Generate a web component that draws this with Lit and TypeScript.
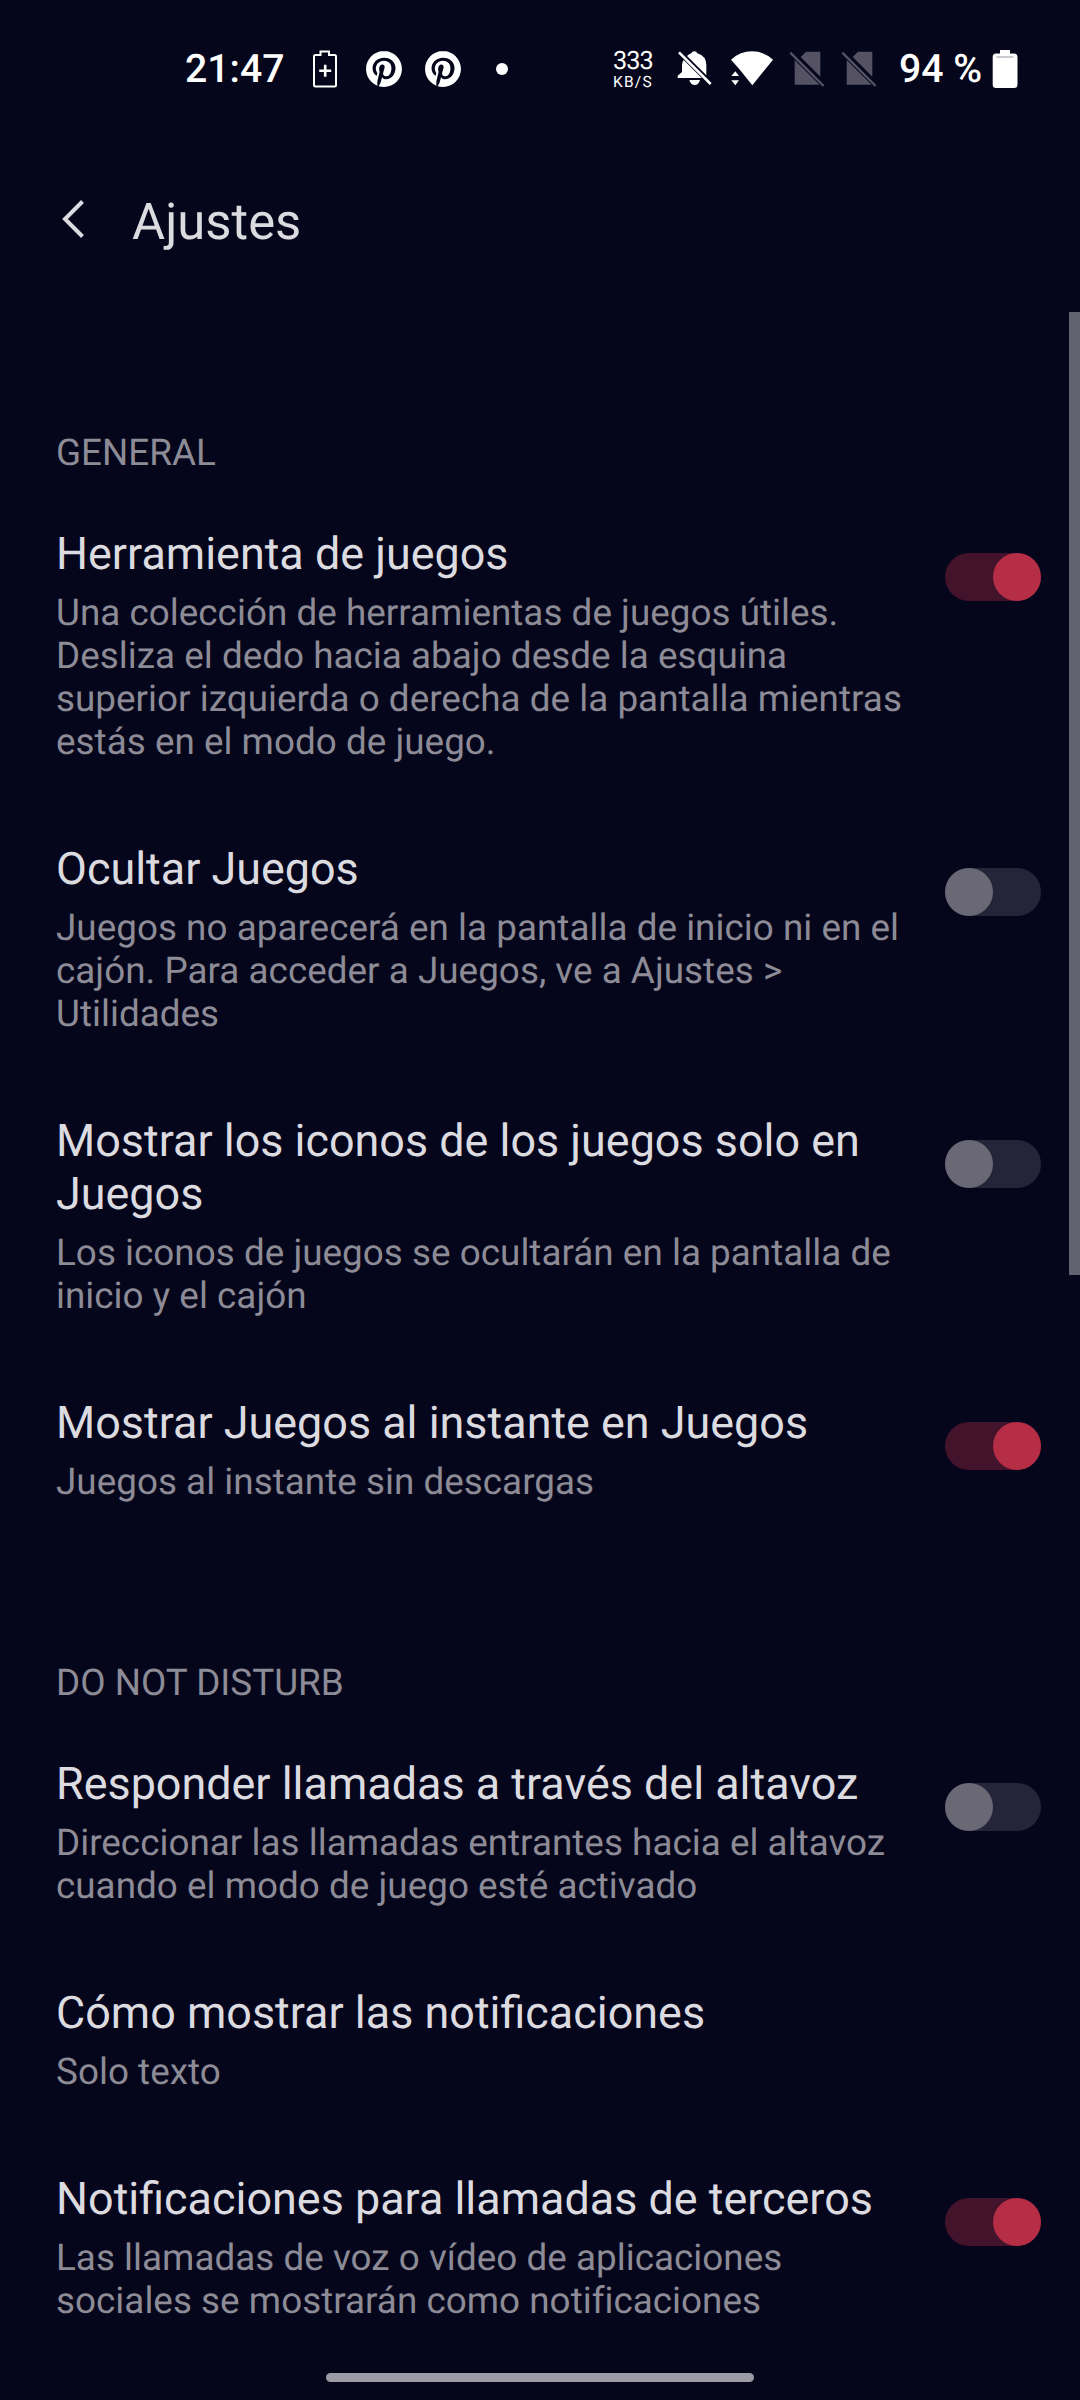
import { LitElement, html, css, nothing } from "lit";
import { customElement, property } from "lit/decorators.js";

interface Setting {
  title: string;
  detail: string;
  on?: boolean;
}

const SECTIONS: { label: string; items: Setting[] }[] = [
  {
    label: "GENERAL",
    items: [
      {
        title: "Herramienta de juegos",
        detail:
          "Una colección de herramientas de juegos útiles.\nDesliza el dedo hacia abajo desde la esquina\nsuperior izquierda o derecha de la pantalla mientras\nestás en el modo de juego.",
        on: true,
      },
      {
        title: "Ocultar Juegos",
        detail:
          "Juegos no aparecerá en la pantalla de inicio ni en el\ncajón. Para acceder a Juegos, ve a Ajustes >\nUtilidades",
        on: false,
      },
      {
        title: "Mostrar los iconos de los juegos solo en\nJuegos",
        detail: "Los iconos de juegos se ocultarán en la pantalla de\ninicio y el cajón",
        on: false,
      },
      {
        title: "Mostrar Juegos al instante en Juegos",
        detail: "Juegos al instante sin descargas",
        on: true,
      },
    ],
  },
  {
    label: "DO NOT DISTURB",
    items: [
      {
        title: "Responder llamadas a través del altavoz",
        detail: "Direccionar las llamadas entrantes hacia el altavoz\ncuando el modo de juego esté activado",
        on: false,
      },
      { title: "Cómo mostrar las notificaciones", detail: "Solo texto" },
      {
        title: "Notificaciones para llamadas de terceros",
        detail: "Las llamadas de voz o vídeo de aplicaciones\nsociales se mostrarán como notificaciones",
        on: true,
      },
    ],
  },
];

@customElement("toggle-switch")
class ToggleSwitch extends LitElement {
  @property({ type: Boolean, reflect: true }) on = false;

  static styles = css`
    :host {
      display: flex;
      box-sizing: border-box;
      width: 96px;
      height: 48px;
      border-radius: 24px;
      background: #25253a;
    }
    :host([on]) {
      background: #43132b;
      justify-content: flex-end;
    }
    .thumb {
      width: 48px;
      height: 48px;
      border-radius: 50%;
      background: #696874;
    }
    :host([on]) .thumb {
      background: #b52e46;
    }
  `;

  render() {
    return html`<div class="thumb"></div>`;
  }
}

@customElement("status-bar")
class StatusBar extends LitElement {
  static styles = css`
    :host {
      display: flex;
      align-items: center;
      box-sizing: border-box;
      height: 138px;
      padding: 0 62px 0 185px;
      color: #fff;
    }
    svg {
      display: block;
      flex: none;
    }
    .clock,
    .level {
      font-size: 39.2px;
      font-weight: 500;
      line-height: 46px;
      white-space: pre;
      flex: none;
    }
    .clock {
      width: 100px;
      margin-right: 27px;
    }
    .saver {
      margin-right: 28px;
    }
    .pin {
      margin-right: 23px;
    }
    .dot {
      width: 12px;
      height: 12px;
      border-radius: 50%;
      background: #fff;
      margin-left: 12px;
    }
    .right {
      display: flex;
      align-items: center;
      margin-left: auto;
    }
    .speed {
      display: flex;
      flex-direction: column;
      width: 42px;
      margin-right: 22px;
      padding-top: 1px;
    }
    .rate {
      font-size: 25.3px;
      line-height: 24px;
      letter-spacing: -1px;
    }
    .unit {
      font-size: 15.5px;
      line-height: 16px;
      letter-spacing: 1.2px;
    }
    .wifi {
      margin-left: 18px;
    }
    .sim {
      margin-left: 16px;
    }
    .level {
      width: 83px;
      margin-left: 22px;
    }
    .battery {
      margin-left: 10px;
    }
  `;

  private pin() {
    return html`<svg class="pin" width="36" height="36" viewBox="0 0 24 24" fill="#fff">
      <path
        d="M12.017 0C5.396 0 .029 5.367.029 11.987c0 5.079 3.158 9.417 7.618 11.162-.105-.949-.199-2.403.041-3.439.219-.937 1.406-5.957 1.406-5.957s-.359-.72-.359-1.781c0-1.663.967-2.911 2.168-2.911 1.024 0 1.518.769 1.518 1.688 0 1.029-.653 2.567-.992 3.992-.285 1.193.6 2.165 1.775 2.165 2.128 0 3.768-2.245 3.768-5.487 0-2.861-2.063-4.869-5.008-4.869-3.41 0-5.409 2.562-5.409 5.199 0 1.033.394 2.143.889 2.741.099.12.112.225.085.345-.09.375-.293 1.199-.334 1.363-.053.225-.172.271-.401.165-1.495-.69-2.433-2.878-2.433-4.646 0-3.776 2.748-7.252 7.92-7.252 4.158 0 7.392 2.967 7.392 6.923 0 4.135-2.607 7.462-6.233 7.462-1.214 0-2.354-.629-2.758-1.379l-.749 2.848c-.269 1.045-1.004 2.352-1.498 3.146 1.123.345 2.306.535 3.55.535 6.607 0 11.985-5.365 11.985-11.987C23.97 5.39 18.592.026 11.985.026z"
      />
    </svg>`;
  }

  private sim() {
    return html`<svg class="sim" width="36" height="36" viewBox="0 0 108 108" fill="#555363">
      <path d="M51 2H94V77L35 18z" />
      <path d="M17 27L92 101H17z" />
      <path d="M4 5L104 105" stroke="#555363" stroke-width="7" />
    </svg>`;
  }

  render() {
    return html`
      <span class="clock">21:47</span>
      <svg class="saver" width="26" height="38" viewBox="0 0 26 38" fill="none" stroke="#fff">
        <path d="M8.500 5V1.500H17V5H22.500Q24 5 24 6.500V35Q24 36.500 22.500 36.500H3.500Q2 36.500 2 35V6.500Q2 5 3.500 5z" stroke-width="2" />
        <path d="M7.200 20.700H19.200M13.200 14.700V26.700" stroke-width="2.600" />
      </svg>
      ${this.pin()}${this.pin()}
      <div class="dot"></div>
      <div class="right">
        <div class="speed">
          <span class="rate">333</span>
          <span class="unit">KB/S</span>
        </div>
        <svg width="36" height="36" viewBox="0 0 108 108" fill="#fff">
          <path d="M30 15Q36 9 43 7Q45 1 52 1Q59 1 61 7Q88 15 88 43V73z" />
          <path d="M20 27L74 81H2V74L15 63V42Q15 33 20 27z" />
          <path d="M37 87H69Q65 102 53 102Q41 102 37 87z" />
          <path d="M6 4L101 99" stroke="#fff" stroke-width="8" />
        </svg>
        <svg class="wifi" width="42" height="36" viewBox="0 0 126 108" fill="#fff">
          <path d="M0 26Q28 1 63 1T126 26L64 103L30 61L24 53z" />
          <path d="M1 75L13 61L24 75zM1 88H24L13 103z" />
        </svg>
        ${this.sim()}${this.sim()}
        <span class="level">94 %</span>
        <svg class="battery" width="26" height="38" viewBox="0 0 26 38">
          <path d="M8 0H18V3.500H22Q25.500 3.500 25.500 7V34.500Q25.500 38 22 38H4Q.7 38 .7 34.500V7Q.7 3.500 4 3.500H8z" fill="#fff" />
          <path d="M4.500 7H21.500" stroke="#c9c9cf" stroke-width="2" />
        </svg>
      </div>
    `;
  }
}

@customElement("setting-row")
class SettingRow extends LitElement {
  @property({ attribute: false }) item!: Setting;

  static styles = css`
    :host {
      display: flex;
      justify-content: space-between;
      align-items: flex-start;
    }
    .copy {
      display: flex;
      flex-direction: column;
      gap: 11px;
      white-space: pre;
    }
    .title {
      font-size: 44.9px;
      line-height: 53px;
      color: #dcdbe0;
    }
    .detail {
      font-size: 36.85px;
      line-height: 43px;
      letter-spacing: 0.02px;
      color: #8c8b96;
      font-variant-ligatures: common-ligatures;
    }
    .switch {
      margin-top: 26px;
      flex: none;
    }
  `;

  render() {
    const { title, detail, on } = this.item;
    return html`
      <div class="copy">
        <div class="title">${title}</div>
        <div class="detail">${detail}</div>
      </div>
      ${on === undefined ? nothing : html`<toggle-switch class="switch" ?on=${on}></toggle-switch>`}
    `;
  }
}

@customElement("app-root")
class AppRoot extends LitElement {
  static styles = css`
    :host {
      display: flex;
      flex-direction: column;
      position: relative;
      box-sizing: border-box;
      width: 1080px;
      height: 2400px;
      overflow: hidden;
      background: #05051b;
      font-family: Roboto, "Liberation Sans", sans-serif;
      text-rendering: geometricPrecision;
    }
    .header {
      display: flex;
      align-items: center;
      height: 174px;
      padding: 0 61px 0;
    }
    .header svg {
      display: block;
      margin-bottom: 12px;
    }
    .heading {
      margin: 0 0 5px 46px;
      font-size: 50.8px;
      line-height: 60px;
      font-weight: 400;
      color: #dcdbe0;
    }
    .content {
      display: flex;
      flex-direction: column;
      gap: 158px;
      padding: 119px 39px 0 56px;
    }
    .section {
      display: flex;
      flex-direction: column;
    }
    .label {
      margin-bottom: 53px;
      font-size: 36.85px;
      line-height: 43px;
      color: #8c8b96;
    }
    .rows {
      display: flex;
      flex-direction: column;
      gap: 79px;
    }
    .scrollbar {
      position: absolute;
      top: 312px;
      right: 0;
      width: 11px;
      height: 963px;
      background: #63626f;
    }
    .home {
      position: absolute;
      left: 326px;
      bottom: 18px;
      width: 428px;
      height: 9px;
      border-radius: 5px;
      background: #9b9aa5;
    }
  `;

  render() {
    return html`
      <status-bar></status-bar>
      <div class="header">
        <svg width="25" height="40" viewBox="0 0 25 40" fill="none" stroke="#dcdbe0" stroke-width="4">
          <path d="M21.500 2.500L4 20L21.500 37.500" />
        </svg>
        <div class="heading">Ajustes</div>
      </div>
      <div class="content">
        ${SECTIONS.map(
          (s) => html`<div class="section">
            <div class="label">${s.label}</div>
            <div class="rows">${s.items.map((i) => html`<setting-row .item=${i}></setting-row>`)}</div>
          </div>`
        )}
      </div>
      <div class="scrollbar"></div>
      <div class="home"></div>
    `;
  }
}
